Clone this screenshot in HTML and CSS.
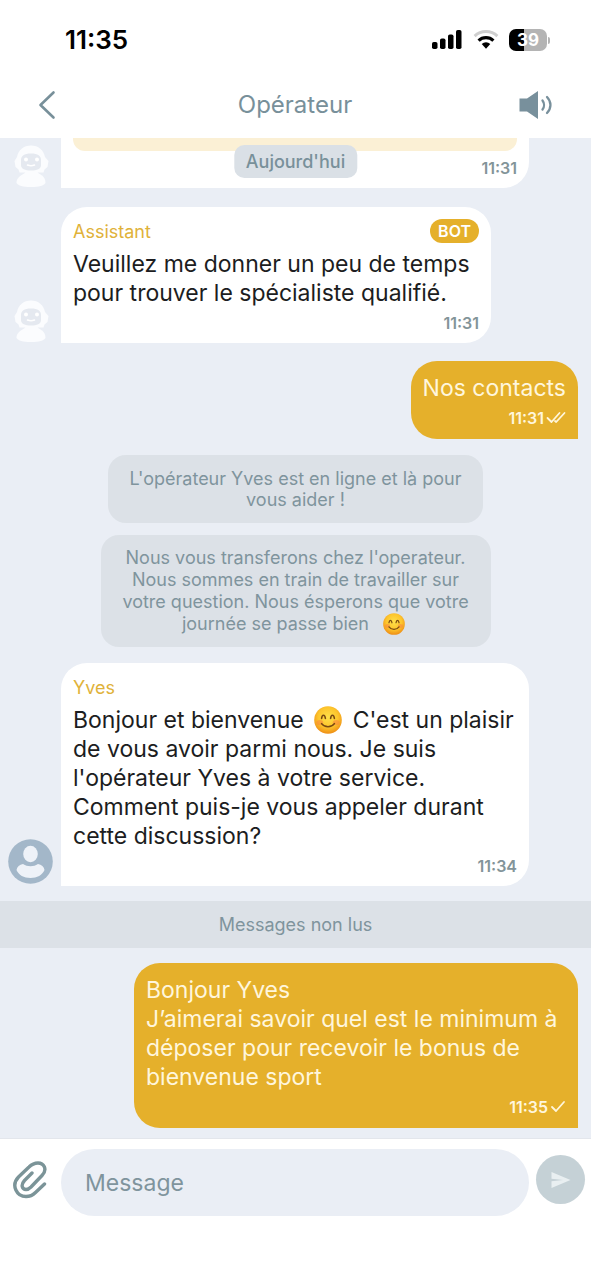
FILE: index.html
```html
<!DOCTYPE html>
<html lang="fr">
<head>
<meta charset="utf-8">
<meta name="viewport" content="width=device-width, initial-scale=1">
<title>Opérateur</title>
<link rel="stylesheet" href="styles.css">
</head>
<body>
<svg class="defs" width="0" height="0" aria-hidden="true">
  <defs>
    <radialGradient id="face" cx="50%" cy="40%" r="60%">
      <stop offset="0" stop-color="#ffe04a"/>
      <stop offset=".6" stop-color="#fdc52c"/>
      <stop offset="1" stop-color="#ee8e16"/>
    </radialGradient>
    <symbol id="smile" viewBox="0 0 28 28">
      <circle cx="14" cy="14" r="13.8" fill="url(#face)"/>
      <ellipse cx="5.8" cy="16.5" rx="3.4" ry="2.6" fill="#f9853f" opacity=".55"/>
      <ellipse cx="22.2" cy="16.5" rx="3.4" ry="2.6" fill="#f9853f" opacity=".55"/>
      <path d="M7.6 12.4c.5-4.2 3.2-4.2 3.8 0M16.6 12.4c.5-4.2 3.2-4.2 3.8 0M7.6 17.6c3 4.200 9.800 4.200 12.800 0" fill="none" stroke="#7a4a12" stroke-width="1.600" stroke-linecap="round"/>
    </symbol>
    <symbol id="bot" viewBox="0 0 36 44">
      <path d="M18 1.500c7.500 0 12.600 4.500 14 11.500l3.500 4-1 6-3 2.500-1 3h-6l3 2c3.500 2 5 4.500 5 8.500-2 2.800-6 4-14.500 4s-12.500-1.200-14.500-4c0-4 2.500-6.500 6-8.500l3-2h-6l-1-3-3-2.500-1-6L4 13c1.400-7 6.500-11.500 14-11.500z" fill="#fbfcfe"/>
      <path d="M8 16c0-4 3-6.500 10-6.500S28 12 28 16v5c0 4-4 5.500-10 5.500S8 25 8 21z" fill="#e5e9f0"/>
      <circle cx="13" cy="15.500" r="2" fill="#fff"/>
      <circle cx="24" cy="15.500" r="2" fill="#fff"/>
      <path d="M14.500 21q3.500 1.500 7 0" fill="none" stroke="#fff" stroke-width="1.600" stroke-linecap="round"/>
    </symbol>
  </defs>
</svg>

<div class="app">
  <div class="status">
    <time class="clock">11:35</time>
    <div class="status-icons">
      <svg width="31" height="20" viewBox="0 0 31 20" aria-label="Signal">
        <rect x="0" y="12" width="5.500" height="7" rx="1.800"/>
        <rect x="8" y="8.500" width="5.500" height="10.500" rx="1.800"/>
        <rect x="16" y="4.500" width="5.500" height="14.500" rx="1.800"/>
        <rect x="24" y="0" width="5.500" height="19" rx="1.800"/>
      </svg>
      <svg width="26" height="20" viewBox="0 0 26 20" aria-label="Wi-Fi">
        <path d="M1.600 6.200a16.400 16.400 0 0 1 22.800 0" fill="none" stroke="#cfcfcf" stroke-width="3"/>
        <path d="M5.600 10.600a10.800 10.800 0 0 1 14.800 0" fill="none" stroke="#000" stroke-width="3.200"/>
        <path d="M8.700 14a6.400 6.400 0 0 1 8.600 0L13 18.800z"/>
      </svg>
      <div class="battery"><span class="battery-body">39</span><span class="battery-cap"></span></div>
    </div>
  </div>

  <header class="bar">
    <button class="icon-btn" type="button" aria-label="Retour">
      <svg width="20" height="30" viewBox="0 0 20 30"><path d="M16.500 2.500 3.500 15l13 12.500" fill="none" stroke="#78909a" stroke-width="2.600" stroke-linecap="round" stroke-linejoin="round"/></svg>
    </button>
    <h1 class="title">Opérateur</h1>
    <button class="icon-btn end" type="button" aria-label="Son">
      <svg width="34" height="30" viewBox="0 0 34 30">
        <path d="M.5 8.500H8L19 1v28L8 21.500H.5z" fill="#78909c"/>
        <path d="M23.500 10.500c2 2.600 2 6.400 0 9M28 7c4.600 4.800 4.600 11.200 0 16" fill="none" stroke="#78909c" stroke-width="2.300" stroke-linecap="round"/>
      </svg>
    </button>
  </header>

  <main class="chat">
    <div class="day">Aujourd'hui</div>

    <div class="row row-first">
      <svg class="avatar bot" width="36" height="44"><use href="#bot"/></svg>
      <article class="bubble wide clipped">
        <div class="option"></div>
        <div class="meta"><time>11:31</time></div>
      </article>
    </div>

    <div class="row">
      <svg class="avatar bot" width="36" height="44"><use href="#bot"/></svg>
      <article class="bubble">
        <div class="author"><span>Assistant</span><span class="badge">BOT</span></div>
        <p class="text">Veuillez me donner un peu de temps pour trouver le spécialiste qualifié.</p>
        <div class="meta"><time>11:31</time></div>
      </article>
    </div>

    <div class="row row-own">
      <article class="bubble own">
        <p class="text">Nos contacts</p>
        <div class="meta"><time>11:31</time>
          <svg width="20" height="14" viewBox="0 0 20 14"><path d="M1.500 7 5.500 11 13.500 2M9 10l1.200 1L18.500 2" fill="none" stroke="#fff6dc" stroke-width="1.800" stroke-linecap="round" stroke-linejoin="round"/></svg>
        </div>
      </article>
    </div>

    <p class="notice">L'opérateur Yves est en ligne et là pour vous aider !</p>
    <p class="notice long">Nous vous transferons chez l'operateur. Nous sommes en train de travailler sur votre question. Nous ésperons que votre journée se passe bien&nbsp; <svg class="emoji" role="img" aria-label="😊"><use href="#smile"/></svg></p>

    <div class="row">
      <svg class="avatar" width="46" height="46" viewBox="0 0 46 46">
        <circle cx="22.500" cy="22.500" r="22.300" fill="#a3b7c9"/>
        <ellipse cx="22.500" cy="15" rx="7.300" ry="8.200" fill="#eef2f8"/>
        <path d="M8.500 31c.5-3.500 3-5.500 6.500-6 2.500 1.700 4.500 2.200 7.500 2.200s5-.5 7.500-2.200c3.500.5 6 2.500 6.500 6C34.500 36 29 39 22.500 39S10.500 36 8.500 31z" fill="#eef2f8"/>
      </svg>
      <article class="bubble wide">
        <div class="author"><span>Yves</span></div>
        <p class="text">Bonjour et bienvenue <svg class="emoji" role="img" aria-label="😊"><use href="#smile"/></svg> C'est un plaisir de vous avoir parmi nous. Je suis l'opérateur Yves à votre service. Comment puis-je vous appeler durant cette discussion?</p>
        <div class="meta"><time>11:34</time></div>
      </article>
    </div>

    <div class="unread">Messages non lus</div>

    <div class="row row-last">
      <article class="bubble own">
        <p class="text">Bonjour Yves<br>J’aimerai savoir quel est le minimum à déposer pour recevoir le bonus de bienvenue sport</p>
        <div class="meta"><time>11:35</time>
          <svg width="16" height="14" viewBox="0 0 16 14"><path d="M2 7 6 11 14 2" fill="none" stroke="#fff6dc" stroke-width="1.800" stroke-linecap="round" stroke-linejoin="round"/></svg>
        </div>
      </article>
    </div>
  </main>

  <form class="composer">
    <button class="icon-btn" type="button" aria-label="Joindre un fichier">
      <svg width="36" height="40" viewBox="0 0 36 40"><path d="M20 13 12.500 20.500C8.500 25 10 29.500 14 29.500c2 0 3.500-1 5-2.500L30 15.500C36 9 31.500 3 26 3c-4 0-7 2-9 4L6.500 17C-1.500 25.500 5 36.500 14 36.500c4 0 7-1.500 9.500-4L32.500 24" fill="none" stroke="#7b9498" stroke-width="3.400" stroke-linecap="round" stroke-linejoin="round"/></svg>
    </button>
    <input class="field" type="text" placeholder="Message" aria-label="Message">
    <button class="send" type="submit" aria-label="Envoyer">
      <svg width="20" height="18" viewBox="0 0 20 18"><path d="M.5 1 19.500 9 .5 17V10.200L12 9 .5 7.800z" fill="#e9eff1"/></svg>
    </button>
  </form>
</div>
</body>
</html>
```

FILE: styles.css
```css
* { box-sizing: border-box; }

body {
  margin: 0;
  background: #fff;
  color: #1c1d21;
  font-family: Inter, "Liberation Sans", sans-serif;
}

h1, p { margin: 0; }
button { padding: 0; border: 0; background: none; cursor: pointer; }
svg { display: block; flex: none; }
.defs { position: absolute; }

.app {
  display: flex;
  flex-direction: column;
  min-height: 100vh;
}

.status {
  display: flex;
  align-items: center;
  justify-content: space-between;
  height: 72px;
  padding: 8px 41px 0 65px;
}

.clock { color: #000; font-size: 26px; font-weight: 600; line-height: 32px; }

.status-icons { display: flex; align-items: center; gap: 10px; }

.battery { display: flex; align-items: center; gap: 1px; }

.battery-body {
  width: 38px;
  height: 22px;
  border-radius: 7px;
  background: linear-gradient(90deg, #000 39%, #b4b4b4 39%);
  color: #fff;
  font-size: 17px;
  font-weight: 700;
  line-height: 22px;
  text-align: center;
}

.battery-cap {
  width: 2px;
  height: 7px;
  border-radius: 0 2px 2px 0;
  background: #b4b4b4;
}

.bar {
  display: grid;
  grid-template-columns: 1fr auto 1fr;
  align-items: center;
  height: 66px;
  padding: 0 38px 0 37px;
}

.bar .icon-btn { justify-self: start; }
.bar .end { justify-self: end; }

.title { color: #78909a; font-size: 24px; font-weight: 400; line-height: 30px; }

.chat {
  position: relative;
  display: flex;
  flex: 1;
  flex-direction: column;
  padding-bottom: 10px;
  background: #eaeef5;
}

.day {
  position: absolute;
  top: 7px;
  left: 50%;
  padding: 0 12px;
  border-radius: 10px;
  background: #dae0e6;
  color: #78909a;
  font-size: 18px;
  font-weight: 500;
  line-height: 33px;
  transform: translateX(-50%);
}

.row {
  display: flex;
  align-items: flex-end;
  gap: 7px;
  margin-top: 16px;
  padding: 0 13px 0 8px;
}

.row-first { margin: 0 0 3px; }
.row-own { justify-content: flex-end; margin-top: 18px; }
.row-last { justify-content: flex-end; margin-top: 15px; }
.avatar { margin-bottom: 1px; }
.avatar.bot { margin: 0 5px; }

.bubble {
  max-width: 430px;
  padding: 12px 12px 10px;
  border-radius: 26px 26px 26px 0;
  background: #fff;
}

.bubble.wide { max-width: 468px; }
.clipped { flex: 1; padding-top: 0; border-radius: 0 0 26px 0; }

.option {
  height: 13px;
  margin-bottom: 7px;
  border-radius: 0 0 12px 12px;
  background: #fbf0d5;
}

.author {
  display: flex;
  align-items: center;
  justify-content: space-between;
  height: 24px;
  margin-bottom: 7px;
  color: #dfb23a;
  font-size: 18px;
}

.badge {
  padding: 0 8px;
  border-radius: 12px;
  background: #e5b02b;
  color: #fff;
  font-size: 16px;
  font-weight: 600;
  line-height: 24px;
}

.text { font-size: 23px; line-height: 29px; }

.meta {
  display: flex;
  align-items: center;
  justify-content: flex-end;
  gap: 2px;
  height: 20px;
  margin-top: 5px;
  color: #839499;
  font-size: 16px;
  font-weight: 600;
}

.own {
  max-width: 444px;
  padding: 13px 12px 11px;
  border-radius: 26px 26px 0 26px;
  background: #e5b02b;
  color: #fff6dc;
}

.own .meta { color: #fff6dc; }

.emoji {
  display: inline-block;
  width: 28px;
  height: 28px;
  margin: -2px 4px;
  vertical-align: -4px;
}

.notice {
  align-self: center;
  max-width: 375px;
  margin-top: 16px;
  padding: 13px 18px;
  border-radius: 18px;
  background: #dce1e7;
  color: #7f949d;
  font-size: 18px;
  line-height: 21px;
  text-align: center;
}

.notice.long { max-width: 390px; margin-top: 12px; line-height: 22px; padding: 12px 16px; }

.notice .emoji { width: 22px; height: 22px; vertical-align: -3px; }

.unread {
  margin-top: 15px;
  background: #dce1e7;
  color: #7f949d;
  font-size: 18px;
  line-height: 47px;
  text-align: center;
}

.composer {
  display: flex;
  align-items: center;
  gap: 7px;
  height: 142px;
  padding: 0 6px 54px 12px;
  border-top: 1px solid #e3e6ec;
}

.composer .icon-btn { width: 42px; margin-bottom: 6px; }

.field {
  flex: 1;
  min-width: 0;
  height: 67px;
  padding: 0 24px;
  border: 0;
  border-radius: 34px;
  background: #eaeef5;
  font: inherit;
  font-size: 23px;
}

.field::placeholder { color: #7f949d; opacity: 1; }

.send {
  display: flex;
  align-items: center;
  justify-content: center;
  width: 49px;
  height: 49px;
  margin-bottom: 6px;
  border-radius: 50%;
  background: #c5d1d6;
}
```
